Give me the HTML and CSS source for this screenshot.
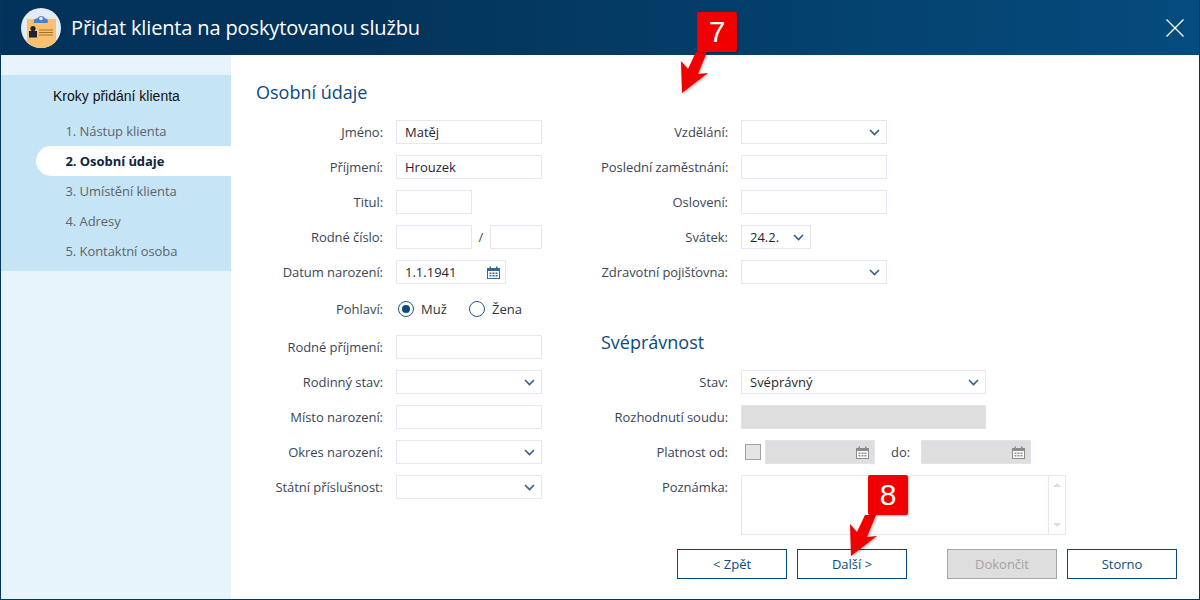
FILE: index.html
```html
<!DOCTYPE html>
<html lang="cs">
<head>
<meta charset="utf-8">
<title>Přidat klienta</title>
<link rel="stylesheet" href="styles.css">
</head>
<body>
<svg class="defs" width="0" height="0" aria-hidden="true">
  <defs>
    <symbol id="chev" viewBox="0 0 11 7"><path d="M1 1l4.500 4.500L10 1" fill="none" stroke="currentColor" stroke-width="1.600"/></symbol>
    <symbol id="cal" viewBox="0 0 13 13"><path d="M0 2h13v11H0z" fill="currentColor"/><path d="M1 5h11v7H1z" fill="#fff"/><path d="M2.500 0.500h1.500v2.500H2.500zM9 0.500h1.500v2.500H9z" fill="currentColor"/><path d="M2.500 6.500h2v1.500h-2zM5.500 6.500h2v1.500h-2zM8.500 6.500h2v1.500h-2zM2.500 9h2v1.500h-2zM5.500 9h2v1.500h-2zM8.500 9h2v1.500h-2z" fill="currentColor"/></symbol>
  </defs>
</svg>
<div class="window">
  <header class="titlebar">
    <svg class="logo" width="40" height="40" viewBox="0 0 40 40">
      <defs><clipPath id="disc"><circle cx="20" cy="20" r="20"/></clipPath></defs>
      <circle cx="20" cy="20" r="20" fill="#e3ebf5"/>
      <g clip-path="url(#disc)">
        <path d="M6 11h29v29H6z" fill="#f9c06f"/>
        <path d="M13 15c-1-3 1-5 3.500-4.500C17.500 7 23 7 24 10.500c2.500-.5 3.500 2 2.500 4.500z" fill="#4a82c4"/>
        <circle cx="20" cy="10.500" r="1.800" fill="#e3ebf5"/>
        <circle cx="12" cy="20.500" r="2.600" fill="#1f2430"/>
        <path d="M8 23h8v6.500H8z" fill="#1f2430"/>
        <path d="M18 21.500h14v1H18zM18 24h14v1H18zM18 26.500h14v1H18z" fill="#a86f2c"/>
      </g>
    </svg>
    <h1 class="window-title">Přidat klienta na poskytovanou službu</h1>
    <svg class="close" width="18" height="18" viewBox="0 0 18 18"><path d="M0.500 0.500l17 17M17.500 0.500l-17 17" fill="none" stroke="#fff" stroke-width="1.300"/></svg>
  </header>
  <div class="content">
    <aside class="sidebar">
      <nav class="steps">
        <div class="steps-title">Kroky přidání klienta</div>
        <div class="step">1. Nástup klienta</div>
        <div class="step active">2. Osobní údaje</div>
        <div class="step">3. Umístění klienta</div>
        <div class="step">4. Adresy</div>
        <div class="step">5. Kontaktní osoba</div>
      </nav>
    </aside>
    <main class="main">
      <h2 class="section-title">Osobní údaje</h2>
      <div class="columns">
        <section class="col">
          <div class="row"><span class="label">Jméno:</span><div class="field w146">Matěj</div></div>
          <div class="row"><span class="label">Příjmení:</span><div class="field w146">Hrouzek</div></div>
          <div class="row"><span class="label">Titul:</span><div class="field w76"></div></div>
          <div class="row"><span class="label">Rodné číslo:</span><div class="field w76"></div><span class="slash">/</span><div class="field w52"></div></div>
          <div class="row"><span class="label">Datum narození:</span><div class="field w110 with-icon date">1.1.1941<svg class="cal" width="13" height="13"><use href="#cal"/></svg></div></div>
          <div class="row row-radio"><span class="label">Pohlaví:</span>
            <span class="radio checked"></span><span class="radio-text">Muž</span>
            <span class="radio"></span><span class="radio-text">Žena</span>
          </div>
          <div class="row"><span class="label">Rodné příjmení:</span><div class="field w146"></div></div>
          <div class="row"><span class="label">Rodinný stav:</span><div class="field w146 with-icon"><svg class="chev" width="11" height="7"><use href="#chev"/></svg></div></div>
          <div class="row"><span class="label">Místo narození:</span><div class="field w146"></div></div>
          <div class="row"><span class="label">Okres narození:</span><div class="field w146 with-icon"><svg class="chev" width="11" height="7"><use href="#chev"/></svg></div></div>
          <div class="row"><span class="label">Státní příslušnost:</span><div class="field w146 with-icon"><svg class="chev" width="11" height="7"><use href="#chev"/></svg></div></div>
        </section>
        <section class="col">
          <div class="row"><span class="label">Vzdělání:</span><div class="field w146 with-icon"><svg class="chev" width="11" height="7"><use href="#chev"/></svg></div></div>
          <div class="row"><span class="label">Poslední zaměstnání:</span><div class="field w146"></div></div>
          <div class="row"><span class="label">Oslovení:</span><div class="field w146"></div></div>
          <div class="row"><span class="label">Svátek:</span><div class="field w70 with-icon">24.2.<svg class="chev" width="11" height="7"><use href="#chev"/></svg></div></div>
          <div class="row"><span class="label">Zdravotní pojišťovna:</span><div class="field w146 with-icon"><svg class="chev" width="11" height="7"><use href="#chev"/></svg></div></div>
          <h2 class="section-title second">Svéprávnost</h2>
          <div class="row"><span class="label">Stav:</span><div class="field w245 with-icon">Svéprávný<svg class="chev" width="11" height="7"><use href="#chev"/></svg></div></div>
          <div class="row"><span class="label">Rozhodnutí soudu:</span><div class="field w245 disabled"></div></div>
          <div class="row"><span class="label">Platnost od:</span>
            <span class="check"></span>
            <div class="field w110 disabled with-icon date"><svg class="cal off" width="13" height="13"><use href="#cal"/></svg></div>
            <span class="label-do">do:</span>
            <div class="field w110 disabled with-icon date"><svg class="cal off" width="13" height="13"><use href="#cal"/></svg></div>
          </div>
          <div class="row row-top"><span class="label">Poznámka:</span>
            <div class="textarea"><div class="scrollbar"><span class="arrow up"></span><span class="arrow down"></span></div></div>
          </div>
        </section>
      </div>
      <footer class="buttons">
        <button class="btn">&lt; Zpět</button>
        <button class="btn">Další &gt;</button>
        <button class="btn btn-disabled gap-left">Dokončit</button>
        <button class="btn">Storno</button>
      </footer>
    </main>
  </div>
  <div class="callout callout-7">
    <svg class="callout-arrow" width="40" height="60" viewBox="0 0 40 60"><path d="M14 0L6 17-1 9 0 41 26 21 16 22 25 0z" fill="#f00000"/></svg>
    <div class="badge">7</div>
  </div>
  <div class="callout callout-8">
    <svg class="callout-arrow" width="40" height="60" viewBox="0 0 40 60"><path d="M14 0L6 17-1 9 0 41 26 21 16 22 25 0z" fill="#f00000"/></svg>
    <div class="badge">8</div>
  </div>
</div>
</body>
</html>
```
FILE: styles.css
```css
* { box-sizing: border-box; }
html, body { margin: 0; padding: 0; }
body { font-family: "Open Sans", "Noto Sans", sans-serif; font-size: 13px; color: #2b3440; background: #fff; }
.defs { position: absolute; }
.window { position: relative; width: 1200px; height: 600px; display: flex; flex-direction: column; border: 1px solid #04375f; border-top: 0; overflow: hidden; }
.titlebar { flex: 0 0 55px; margin: 0 -1px; display: flex; align-items: center; padding: 0 16px 0 21px; background: linear-gradient(90deg, #03335a 0%, #03335a 30%, #054c7e 100%); }
.logo { flex: none; margin-right: 10px; }
.window-title { margin: 0; flex: 1; font-size: 20px; font-weight: 400; color: #fff; letter-spacing: -0.14px; }
.close { flex: none; }
.content { flex: 1; display: flex; min-height: 0; }
.sidebar { flex: 0 0 230px; background: #e8f4fb; padding-top: 20px; }
.steps { background: #c5e4f6; padding-bottom: 5px; }
.steps-title { height: 41px; padding: 13px 0 0 52px; font-family: "Liberation Sans", Arial, sans-serif; font-size: 14px; line-height: 16px; color: #111; }
.step { height: 30px; line-height: 30px; padding-left: 64.500px; color: #5f6468; letter-spacing: -0.06px; }
.step.active { margin-left: 35px; padding-left: 29.500px; background: #fff; border-radius: 15px 0 0 15px; font-weight: 700; color: #10243c; }
.main { flex: 1; padding: 25px 22px 20px 25px; display: flex; flex-direction: column; }
.section-title { margin: 0 0 16px; font-size: 18px; line-height: 24px; font-weight: 400; color: #0b4a80; }
.section-title.second { margin: 35px 0 5px; }
.columns { display: grid; grid-template-columns: 345px 1fr; flex: 1; }
.col { display: flex; flex-direction: column; gap: 11px; }
.row { display: flex; align-items: center; min-height: 24px; }
.row-radio { height: 29px; padding-bottom: 1px; }
.row-top { align-items: flex-start; }
.row-top .label { padding-top: 3px; }
.label { flex: 0 0 127px; min-width: 0; text-align: right; margin-right: 13px; color: #3a4656; white-space: nowrap; letter-spacing: -0.05px; }
.field { height: 24px; line-height: 22px; border: 1px solid #e6e6f4; padding: 0 8px; color: #1f2630; background: #fff; flex: none; }
.with-icon { display: flex; align-items: center; justify-content: space-between; padding-right: 6px; }
.with-icon.date { padding-right: 5px; }
.w52 { width: 52px; } .w70 { width: 70px; } .w76 { width: 76px; } .w110 { width: 110px; } .w146 { width: 146px; } .w245 { width: 245px; }
.with-icon .chev, .with-icon .cal { margin-left: auto; flex: none; }
.chev { color: #2f5f8e; }
.cal { color: #2f6a9a; }
.cal.off { color: #8a8a8a; }
.disabled { background: #dedede; border-color: #e2e2ee; }
.slash { width: 18px; text-align: center; color: #3a4656; }
.radio { width: 16px; height: 16px; border: 1.500px solid #1f5a8c; border-radius: 50%; margin-left: 2px; background: #fff; flex: none; display: flex; align-items: center; justify-content: center; }
.radio.checked::after { content: ""; width: 8px; height: 8px; border-radius: 50%; background: #0b4a80; }
.radio-text { margin-left: 7px; width: 46px; color: #2b3440; }
.check { width: 16px; height: 16px; margin: 0 4px; border: 1px solid #a0a0a0; background: #e4e4e4; flex: none; }
.label-do { width: 46px; padding-left: 16px; color: #3a4656; flex: none; }
.textarea { width: 325px; height: 60px; border: 1px solid #e6e6f4; display: flex; justify-content: flex-end; flex: none; }
.scrollbar { width: 17px; border-left: 1px solid #e6e6f4; display: flex; flex-direction: column; justify-content: space-between; align-items: center; padding: 7px 0; }
.arrow { width: 0; height: 0; border-left: 4px solid transparent; border-right: 4px solid transparent; }
.arrow.up { border-bottom: 4px solid #dcdcdc; }
.arrow.down { border-top: 4px solid #dcdcdc; }
.buttons { display: flex; justify-content: flex-end; gap: 10px; }
.btn { width: 110px; height: 30px; border: 1px solid #054a7b; background: #fff; color: #0b4a80; font: 13px "Open Sans", "Noto Sans", sans-serif; padding: 0; }
.btn-disabled { background: #dedede; border-color: #a6a6a6; color: #a3a3a3; }
.gap-left { margin-left: 30px; }
.callout { position: absolute; width: 40px; height: 100px; }
.callout-7 { left: 696px; top: 12px; }
.callout-8 { left: 867px; top: 475px; }
.badge { position: absolute; left: 0; top: 0; width: 40px; height: 40px; background: #f00000; border-radius: 2px; color: #fff; font: 30px/40px "Liberation Sans", Arial, sans-serif; text-align: center; box-shadow: 1px 1px 2px rgba(0,0,0,.3); }
.callout-arrow { position: absolute; left: -17px; top: 40px; overflow: visible; filter: drop-shadow(1px 1px 1.500px rgba(0,0,0,.3)); }
.callout-7 .callout-arrow { left: -15px; }
```
